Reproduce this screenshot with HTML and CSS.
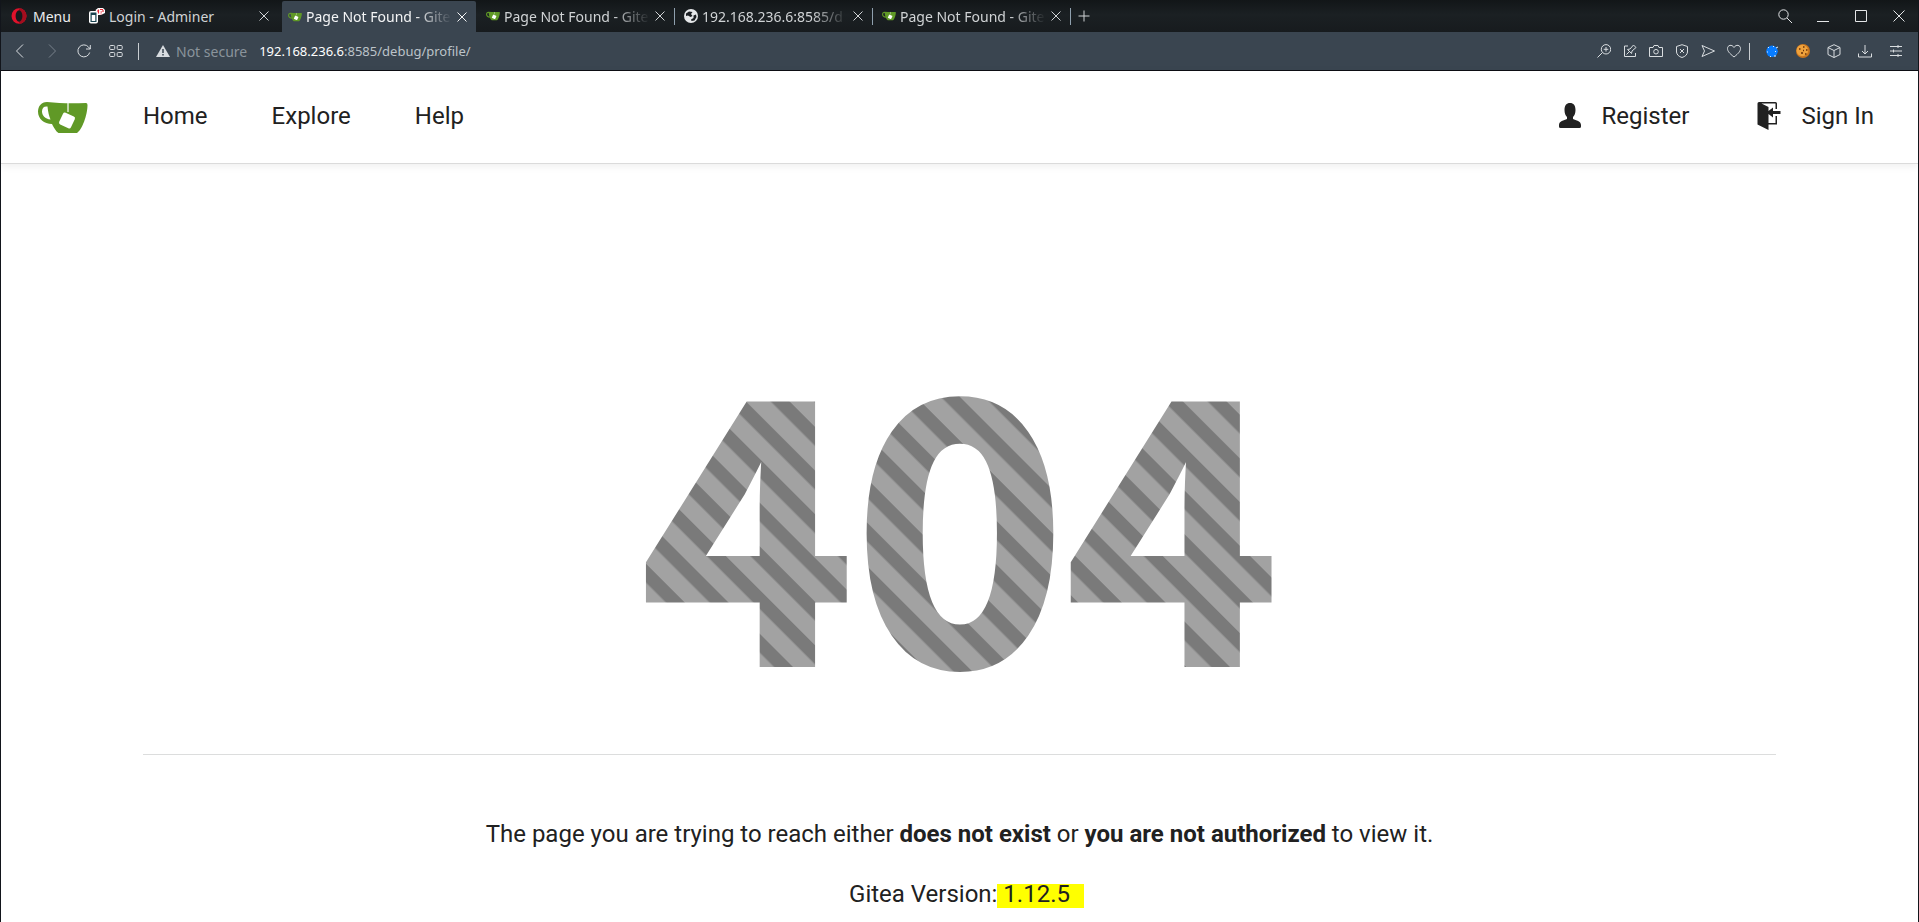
FILE: index.html
```html
<!DOCTYPE html>
<html lang="en">
<head>
<meta charset="utf-8">
<title>Page Not Found - Gitea</title>
<link rel="stylesheet" href="styles.css">
</head>
<body>
<svg class="defs" aria-hidden="true">
  <symbol id="cup" viewBox="0 0 50 31">
    <path fill="#609926" d="M9 0C3 0 0 4.500 0 9.500C0 17 6 22 14 22C15.500 25 18 29.500 20.500 31H39C44 28 49.500 13 49.500 3Q49.500 1 48 1C35 1.500 22 1.500 9 0ZM9.500 4.500C10 10 11 14 12.500 17.500C7 17 4 13 4 9.500C4 6 6 4 9.500 4.500Z"/>
    <path d="M30 1V10" stroke="#fff" stroke-width="1.500" opacity=".8"/>
    <rect x="22.500" y="12" width="13" height="13" rx="2" fill="#fff" transform="rotate(25 29 18.500)"/>
  </symbol>
  <symbol id="x" viewBox="0 0 12 12"><path d="M1.500 1.500l9 9M10.500 1.500l-9 9"/></symbol>
</svg>
<div class="window">
  <header class="tabbar">
    <button class="menu"><svg class="opera" viewBox="0 0 16 16"><ellipse cx="8" cy="8" rx="7.500" ry="7.800" fill="#e0122b"/><path d="M8 .2A7.500 7.800 0 0 1 8 15.800" fill="#a40d1e"/><ellipse cx="8" cy="8" rx="3.400" ry="5.800" fill="#16191d"/></svg>Menu</button>
    <nav class="tabs" aria-label="Tabs">
      <div class="tab first">
        <svg class="fav adminer" viewBox="0 0 16 16"><rect x="0" y="3" width="9" height="12.500" rx="2" fill="#fff"/><path d="M1.500 4.500h6v9.500h-6z" fill="#17424f"/><path d="M2.700 7h3.600v6H2.700z" fill="#fff"/><path d="M6.500 2l2.500-2h5l2 2v3L12 7H9z" fill="#fff"/><path d="M8 3h2M9.500 1.500v4M11 1.500h3M14 2v2M11.500 4h1.500M11.500 6h1" stroke="#e52b38" stroke-width="1.200"/></svg>
        <a href="#" class="title">Login - Adminer</a><button class="close" aria-label="Close tab"><svg class="line"><use href="#x"/></svg></button>
      </div>
      <div class="tab active">
        <svg class="fav"><use href="#cup"/></svg><a href="#" class="title">Page Not Found - Gite</a><button class="close" aria-label="Close tab"><svg class="line"><use href="#x"/></svg></button>
      </div>
      <div class="tab">
        <svg class="fav"><use href="#cup"/></svg><a href="#" class="title">Page Not Found - Gite</a><button class="close" aria-label="Close tab"><svg class="line"><use href="#x"/></svg></button>
      </div>
      <div class="tab">
        <svg class="fav" viewBox="0 0 14 14"><circle cx="7" cy="7" r="7" fill="#e6e8ea"/><path d="M2 4.500L5 2.500L8.500 3L7 5L8.500 7L6.500 8L4 6.500L2 7M9.500 6.500l2.500-1 .5 2.500-2 3.500L7.500 12 7 10.500 9.500 9z" fill="#1a1e22"/></svg><a href="#" class="title">192.168.236.6:8585/d</a><button class="close" aria-label="Close tab"><svg class="line"><use href="#x"/></svg></button>
      </div>
      <div class="tab">
        <svg class="fav"><use href="#cup"/></svg><a href="#" class="title">Page Not Found - Gite</a><button class="close" aria-label="Close tab"><svg class="line"><use href="#x"/></svg></button>
      </div>
      <button class="new" aria-label="New tab"><svg class="line" viewBox="0 0 12 12"><path d="M6 .5v11M.5 6h11"/></svg></button>
    </nav>
    <div class="controls">
      <button aria-label="Search"><svg class="line" viewBox="0 0 14 14"><circle cx="5.500" cy="5.500" r="4.700"/><path d="M9 9l5 5"/></svg></button>
      <button aria-label="Minimize"><svg class="line" viewBox="0 0 14 14"><path d="M1 12.500h12"/></svg></button>
      <button aria-label="Maximize"><svg class="line" viewBox="0 0 14 14"><path d="M1.500 1.500h11v11h-11z"/></svg></button>
      <button aria-label="Close"><svg class="line" viewBox="0 0 14 14"><path d="M1.500 1.500l11 11M12.500 1.500l-11 11"/></svg></button>
    </div>
  </header>
  <div class="toolbar">
    <div class="group navs">
      <button aria-label="Back"><svg class="line" viewBox="0 0 14 14"><path d="M10 .5l-6.500 6.500 6.500 6.500"/></svg></button>
      <button class="dim" aria-label="Forward"><svg class="line" viewBox="0 0 14 14"><path d="M4 .5l6.500 6.500-6.500 6.500"/></svg></button>
      <button aria-label="Reload"><svg class="line" viewBox="0 0 14 14"><path d="M12.700 8.500A6 6 0 1 1 11.500 3L13.300 5M13.300 1v4H9"/></svg></button>
      <button aria-label="Speed dial"><svg class="line" viewBox="0 0 14 14"><rect x=".7" y="1.500" width="5" height="4" rx="1"/><rect x="8.200" y="1.500" width="5" height="4" rx="1"/><rect x=".7" y="8.500" width="5" height="4" rx="1"/><rect x="8.200" y="8.500" width="5" height="4" rx="1"/></svg></button>
    </div>
    <span class="bar"></span>
    <button class="secure"><svg viewBox="0 0 14 12"><path fill="#d8dce0" d="M7 0L14 12H0z"/><path d="M7 4v4M7 9v1.500" stroke="#3a4550" stroke-width="1.500"/></svg>Not secure</button>
    <a class="url" href="#"><b>192.168.236.6</b>:8585/debug/profile/</a>
    <div class="group tools">
      <button aria-label="Zoom"><svg class="line" viewBox="0 0 14 14"><circle cx="9" cy="5.300" r="4.700"/><path d="M5.500 8.500L.5 13.500M9 3v4.600M6.700 5.300h4.600"/></svg></button>
      <button aria-label="Pin"><svg class="line" viewBox="0 0 14 14"><path d="M5 2H1.500v10.500H12.500V9M3.500 10.500l3-3M4.500 5.500l4 4 .5-2.500 4-3.500-2.500-2.500L7 5z"/></svg></button>
      <button aria-label="Snapshot"><svg class="line" viewBox="0 0 14 14"><path d="M.5 3.500H4L5 1.500h4l1 2h3.500v9H.5z"/><circle cx="7" cy="7.700" r="2.300"/></svg></button>
      <button aria-label="Shield"><svg class="line" viewBox="0 0 14 14"><path d="M7 .7L12.500 2.500V8Q12 12 7 13.500Q2 12 1.500 8V2.500zM5 5l4 4M9 5L5 9"/></svg></button>
      <button aria-label="Send"><svg class="line" viewBox="0 0 14 14"><path d="M1 1.500L13.500 7L1 12.500L3.500 7z"/></svg></button>
      <button aria-label="Bookmark"><svg class="line" viewBox="0 0 14 14"><path d="M7 13C2 9 .5 7 .5 4.500C.5 1 5 0 7 3.500C9 0 13.500 1 13.500 4.500C13.500 7 12 9 7 13z"/></svg></button>
    </div>
    <span class="bar"></span>
    <div class="group extras">
      <button aria-label="Profile extension"><svg viewBox="0 0 14 14"><circle cx="7" cy="7.300" r="5.800" fill="#087cff"/><path d="M3 3l1 1M8 2l1 1M11 4l2-1M2 8h1M5 12l1 1M9 12h2M10 7l1 1" stroke="#dff1ff"/></svg></button>
      <button aria-label="Cookie extension"><svg viewBox="0 0 14 14"><circle cx="7" cy="7" r="7" fill="#c9751d"/><circle cx="6.300" cy="6.500" r="5.800" fill="#efa23c"/><path d="M3 5h1.500M7 3h1.500M10 6h1.500M5 9h2M9 10h1.500M7 6.500h1" stroke="#693007" stroke-width="1.500"/></svg></button>
      <button aria-label="Extensions"><svg class="line" viewBox="0 0 14 14"><path d="M7 .7L13 3.500V10.500L7 13.500L1 10.500V3.500zM1 3.500L7 6.500L13 3.500M7 6.500v7"/></svg></button>
      <button aria-label="Downloads"><svg class="line" viewBox="0 0 14 14"><path d="M.5 9.500v3.500h13V9.500M7 1v9M4 7l3 3 3-3"/></svg></button>
      <button aria-label="Easy setup"><svg class="line" viewBox="0 0 14 14"><path d="M1 2.500h12M1 7h12M1 11.500h12M9 1v3M4.500 5.500v3M9 10v3"/></svg></button>
    </div>
  </div>
  <div class="page">
    <nav class="site">
      <a class="logo" href="#" aria-label="Gitea"><svg viewBox="0 0 50 31"><use href="#cup"/></svg></a>
      <a href="#">Home</a><a href="#">Explore</a><a href="#">Help</a>
      <a class="push" href="#"><svg viewBox="0 0 24 28"><path fill="#212121" d="M12 1C15.500 1 17.500 3.500 17.500 8C17.500 11.500 16.500 13.500 15 15V17C18 18.500 23 19 23 23V24.500Q23 26 21.500 26H2.500Q1 26 1 24.500V23C1 19 6 18.500 9 17V15C7.500 13.500 6.500 11.500 6.500 8C6.500 3.500 8.500 1 12 1Z"/></svg>Register</a>
      <a href="#"><svg viewBox="0 0 24 28"><path fill="#212121" d="M.5 1.500Q.5 0 2 0H18.500Q20 0 20 1.500V7H18.500V1.500H4.500L11.500 5V9L16 5.500V9H23.500V12H16V15.500L11.500 12V21H18.500V14H20V22.500H11.500V28L.5 22.500Z"/></svg>Sign In</a>
    </nav>
    <main>
      <h1><svg viewBox="0 0 672 300">
        <defs><pattern id="stripes" width="30.900" height="30.900" patternUnits="userSpaceOnUse" patternTransform="rotate(45) translate(0 18.800)"><rect width="31" height="31" fill="#a2a2a2"/><rect width="31" height="13.400" fill="#7a7a7a"/></pattern></defs>
        <text x="336" y="280" text-anchor="middle" class="code" fill="url(#stripes)" stroke="url(#stripes)">404</text></svg></h1>
      <hr>
      <p>The page you are trying to reach either <strong>does not exist</strong> or <strong>you are not authorized</strong> to view it.</p>
      <p>Gitea Version:<mark> 1.12.5</mark></p>
    </main>
  </div>
</div>
</body>
</html>
```

FILE: styles.css
```css
* { box-sizing: border-box; }
body { margin: 0; background: #fff; font-family: "Noto Sans", sans-serif; font-size: 14px; }
button { border: 0; padding: 0; background: none; font: inherit; color: inherit; }
a { color: inherit; text-decoration: none; }
svg { display: block; flex: none; }
.defs { display: none; }
.line { fill: none; stroke: currentColor; stroke-width: 1; }

.window { display: flex; flex-direction: column; min-height: 100vh; overflow: hidden; border: solid #12151b; border-width: 0 1px; }
.tabbar { display: flex; height: 32px; background: linear-gradient(#121618, #1b2023 45%, #171b1e); color: #d0d3d5; }
.menu { display: flex; align-items: center; gap: 6px; width: 83px; padding-left: 10px; color: #eceeef; }
.opera { width: 16px; height: 16px; }
.tabs { display: flex; flex: 1; }
.tab { display: flex; align-items: center; position: relative; width: 198px; padding: 0 8px 0 10px; gap: 4px; }
.tab + .tab:not(.active)::after { content: ""; position: absolute; right: -1px; top: 8px; width: 1px; height: 17px; background: #8fa0ae; }
.tab.first { padding: 0 12px 0 5px; }
.tab.active { width: 194px; padding: 0 8px 0 6px; margin-top: 1px; background: #3a4550; color: #f3f4f5; border-radius: 2px 2px 0 0; }
.fav { width: 14px; height: 14px; }
.adminer { width: 16px; height: 16px; }
.title { flex: 1; white-space: nowrap; }
.tab:not(.first) .title { -webkit-mask-image: linear-gradient(90deg, #000 75%, transparent); mask-image: linear-gradient(90deg, #000 75%, transparent); }
.close svg, .new svg { width: 12px; height: 12px; }
.new { padding: 0 8px; margin-top: -1px; }
.controls { display: flex; color: #e4e6e8; }
.controls button { display: grid; place-items: center; width: 38px; }
.controls svg { width: 14px; height: 14px; }

.toolbar { display: flex; align-items: center; height: 39px; border-bottom: 1px solid #0d0e14; background: #3a4550; color: #d9dde0; }
.group { display: flex; align-items: center; }
.group button { display: grid; place-items: center; height: 32px; }
.group svg { width: 14px; height: 14px; }
.navs { padding-left: 3px; }
.navs button { width: 32px; }
.dim { color: #78828b; }
.bar { width: 1px; height: 17px; margin: 0 6px; background: #c9ced2; }
.secure { display: flex; align-items: center; gap: 6px; margin-left: 11px; color: #8a949c; }
.secure svg { width: 14px; height: 12px; }
.url { margin-left: 12px; color: #bcc3c9; font-size: 13px; }
.url b { font-weight: 400; color: #fff; }
.tools { margin-left: auto; }
.tools button { width: 26px; }
.tools + .bar { margin: 0 6px 0 2px; }
.extras { padding-right: 7px; }
.extras button { width: 31px; }

.page { flex: 1; color: #212121; font-family: Roboto, sans-serif; font-size: 24px; line-height: 32px; }
.site { display: flex; align-items: center; height: 93px; gap: 64px; padding: 0 44px 2px 37px; border-bottom: 1px solid #dbdbdb; box-shadow: 0 2px 8px rgba(0, 0, 0, .07); }
.site a { display: flex; align-items: center; gap: 20px; }
.logo svg { width: 50px; height: 31px; }
.site .logo { margin-right: -9px; padding-top: 2px; }
.site .push { margin: 0 4px 0 auto; }
.site a:not(.logo) svg { width: 24px; height: 28px; }
main { padding: 220px 142px 0; text-align: center; }
h1 { margin: 0; }
h1 svg { width: 100%; max-width: 672px; height: auto; margin: 0 auto; overflow: visible; }
.code { font-family: "Noto Sans CJK SC", sans-serif; font-size: 360px; font-weight: 700; stroke-width: 6px; }
hr { height: 1px; margin: 70px 0 63px; border: 0; background: #dcdddd; }
p { margin: 0 0 28px; }
mark { display: inline-block; margin-right: -14px; padding: 0 14px 4px 0; background: #ff0; color: inherit; line-height: 20px; white-space: pre; }
```
